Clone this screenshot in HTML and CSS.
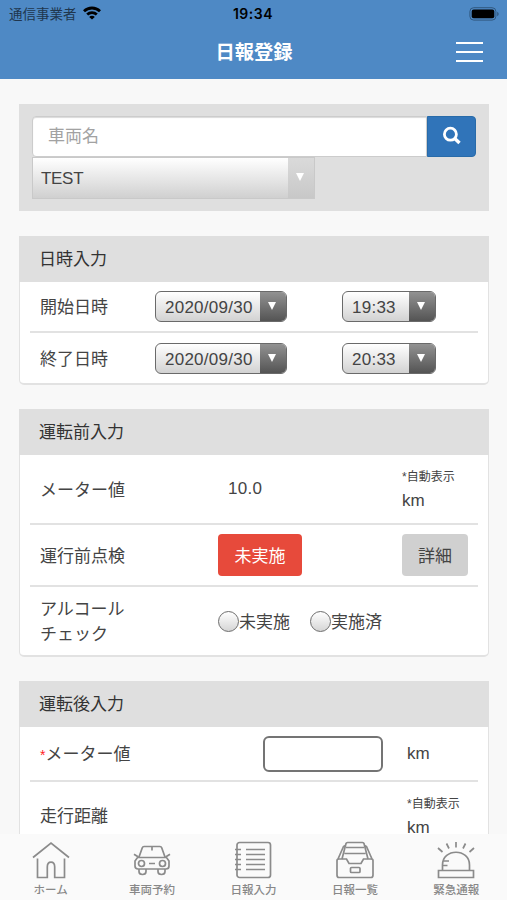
FILE: index.html
```html
<!DOCTYPE html>
<html lang="ja">

<head>
    <meta charset="UTF-8">
    <meta name="viewport" content="width=device-width, initial-scale=1.0">
    <title>日報登録</title>
    <link rel="stylesheet" href="styles.css">
</head>

<body>
    <!-- ヘッダー -->
    <header class="header">
        <div class="status">
            <div class="carrier">
                <span>通信事業者</span>
                <svg width="18" height="14" viewBox="0 0 18 14">
                    <g fill="none" stroke="#000" stroke-width="2.8">
                        <path d="M1 5.2a11.6 11.6 0 0 1 16 0" />
                        <path d="M4.2 8.6a7 7 0 0 1 9.6 0" />
                    </g>
                    <path d="M9 13.6 6.2 10.9a3.8 3.8 0 0 1 5.6 0z" />
                </svg>
            </div>
            <span class="clock">19:34</span>
            <svg class="battery" width="31" height="14" viewBox="0 0 31 14">
                <rect x="0.9" y="0.7" width="26" height="12.4" rx="3.8" fill="none" stroke="#31587f" stroke-width="1" />
                <rect x="2.7" y="2.5" width="22.6" height="8.8" rx="2" />
                <path d="M28.2 4.8v4.4c2-.8 2-3.6 0-4.4z" fill="#31587f" />
            </svg>
        </div>
        <div class="titlebar">
            <h1>日報登録</h1>
            <div class="menu"><span></span><span></span><span></span></div>
        </div>
    </header>

    <main class="content">
        <!-- 車両検索 -->
        <div class="search">
            <div class="search-row">
                <input type="text" class="search-input" placeholder="車両名">
                <button class="search-button">
                    <svg width="20" height="20" viewBox="0 0 20 20" fill="none" stroke="#fff">
                        <circle cx="8.4" cy="8.2" r="6" stroke-width="2.8" />
                        <path d="m12.5 12.3 5 4.8" stroke-width="3.4" />
                    </svg>
                </button>
            </div>
            <div class="car-select"><span>TEST</span><i><b></b></i></div>
        </div>

        <!-- 日時入力 -->
        <section class="card">
            <h2>日時入力</h2>
            <div class="row row-date">
                <span class="label">開始日時</span>
                <div class="select"><span>2020/09/30</span><i><b></b></i></div>
                <div class="select time"><span>19:33</span><i><b></b></i></div>
            </div>
            <div class="row row-date">
                <span class="label">終了日時</span>
                <div class="select"><span>2020/09/30</span><i><b></b></i></div>
                <div class="select time"><span>20:33</span><i><b></b></i></div>
            </div>
        </section>

        <!-- 運転前入力 -->
        <section class="card before">
            <h2>運転前入力</h2>
            <div class="row row-meter">
                <span class="label">メーター値</span>
                <span class="value">10.0</span>
                <div class="unit"><small>*自動表示</small>km</div>
            </div>
            <div class="row row-check">
                <span class="label">運行前点検</span>
                <div><button class="button red">未実施</button></div>
                <button class="button gray">詳細</button>
            </div>
            <div class="row row-alcohol">
                <span class="label">アルコール<br>チェック</span>
                <div class="radios">
                    <label><span class="radio"></span>未実施</label>
                    <label><span class="radio"></span>実施済</label>
                </div>
            </div>
        </section>

        <!-- 運転後入力 -->
        <section class="card after">
            <h2>運転後入力</h2>
            <div class="row row-after">
                <span class="label"><em>*</em>メーター値</span>
                <input type="text" class="meter-input">
                <div class="unit">km</div>
            </div>
            <div class="row row-distance">
                <span class="label">走行距離</span>
                <span></span>
                <div class="unit"><small>*自動表示</small>km</div>
            </div>
        </section>
    </main>

    <!-- 下部メニュー -->
    <nav class="tabbar">
        <div class="tab">
            <svg width="40" height="40" viewBox="0 0 40 40">
                <path d="M2 17.5 20 3l18 14.5M6.5 18.500v19h9.8V27c0-6.5 7.4-6.5 7.4 0v10.5h9.8V18.500" />
            </svg>
            <span>ホーム</span>
        </div>
        <div class="tab">
            <svg width="40" height="40" viewBox="0 0 40 40">
                <path d="M7 17 10.3 7.7Q10.7 6.500 12 6.500H28Q29.300 6.500 29.700 7.700L33 17M5.500 17.500H34.500L37 21V26Q37 29 34 29H6Q3 29 3 26V21ZM20 7v3.500M2 14.200 6 16.800M38 14.200 34 16.800M17 23.500h6M7 29v2.500c0 4 7 4 7 0V29M26 29v2.500c0 4 7 4 7 0V29" />
                <circle cx="9.500" cy="23.500" r="3" />
                <circle cx="30.500" cy="23.500" r="3" />
            </svg>
            <span>車両予約</span>
        </div>
        <div class="tab">
            <svg width="40" height="40" viewBox="0 0 40 40">
                <rect x="4" y="2.500" width="33.500" height="35" rx="2.500" />
                <path d="M13 9.500h19M13 14.500h19M13 19.500h19M13 24.500h19M13 29.500h19" />
                <path d="M2 9.500h6M2 14.500h6M2 19.500h6M2 24.500h6M2 29.500h6" />
            </svg>
            <span>日報入力</span>
        </div>
        <div class="tab">
            <svg width="40" height="40" viewBox="0 0 40 40">
                <path d="M2 20.500Q2 19 4 19H11.500L14 23.500H26L28.500 19H36Q38 19 38 20.500V35Q38 37.500 36 37.500H4Q2 37.500 2 35Z" />
                <path d="M3 19 8.500 6.500 11 5M37 19 31.500 6.500 29 5M7 19 11 3.500Q11.300 2.500 12.500 2.500H27.500Q28.700 2.500 29 3.500L33 19M11 7.500h18M9.500 13.500h21" />
                <rect x="15.500" y="27.500" width="9.500" height="5" rx="1" />
            </svg>
            <span>日報一覧</span>
        </div>
        <div class="tab">
            <svg width="40" height="40" viewBox="0 0 40 40">
                <path d="M2.500 30.500h35v7h-35zM6.500 30.500V25C6.500 8 33.500 8 33.500 25v5.500M7.500 21h5.500M7 25.500h4.500" />
                <path d="M20 2v5.500M10.500 3.500l2.500 5M29.500 3.500 27 8.500M2 8l4.500 4M38 8l-4.500 4" />
            </svg>
            <span>緊急通報</span>
        </div>
    </nav>
</body>

</html>
```
FILE: styles.css
```css
* {
    box-sizing: border-box;
}

body {
    margin: 0;
    height: 900px;
    display: flex;
    flex-direction: column;
    overflow: hidden;
    background: #f8f8f8;
    color: #444;
    font-family: "Liberation Sans", "Noto Sans CJK JP", sans-serif;
    font-size: 17px;
}

svg {
    display: block;
}

/* ヘッダー */
.header {
    flex: none;
    height: 79px;
    background: #4e89c5;
}

.status {
    display: grid;
    grid-template-columns: 1fr auto 1fr;
    align-items: center;
    height: 27px;
    padding: 0 7px 0 9px;
}

.carrier {
    display: flex;
    align-items: center;
    gap: 6px;
    font-size: 13.5px;
    color: #20364d;
}

.carrier span {
    margin-top: -2px;
}

.carrier svg {
    margin-top: -2px;
}

.clock {
    margin-left: -3px;
    font-family: Inter, sans-serif;
    font-size: 14px;
    font-weight: 600;
    letter-spacing: 0.5px;
    color: #000;
}

.battery {
    justify-self: end;
}

.titlebar {
    display: grid;
    grid-template-columns: 1fr auto 1fr;
    align-items: center;
    height: 50px;
    padding-right: 24px;
    padding-left: 24px;
}

h1 {
    grid-column: 2;
    margin: -2px 0 0 1px;
    font-size: 19.3px;
    color: #fff;
}

.menu {
    justify-self: end;
    width: 27px;
    display: flex;
    flex-direction: column;
    gap: 7px;
}

.menu span {
    height: 2px;
    background: #fff;
}

/* 入力エリア */
.content {
    flex: 1;
    min-height: 0;
    overflow: hidden;
    padding: 25px 18px 0 19px;
}

.search {
    height: 107px;
    margin-bottom: 24px;
    padding: 12px 13px;
    background: #dfdfdf;
}

.search-row {
    display: flex;
    height: 41px;
}

.search-input {
    flex: 1;
    border: 1px solid #ccc;
    border-radius: 4px 0 0 4px;
    box-shadow: inset 0 1px 1px rgba(0, 0, 0, 0.15);
    padding: 0 15px;
    font: inherit;
}

.search-input::placeholder {
    color: #a2a2a2;
}

.search-button {
    width: 49px;
    border: 1px solid #286ba9;
    border-radius: 0 4px 4px 0;
    background: #3074b9;
    padding: 0 0 2px 14px;
}

.car-select {
    display: flex;
    width: 283px;
    height: 42px;
    border: 1px solid #c9c9c9;
    background: linear-gradient(#fff, #d0d0d0);
    line-height: 41px;
}

.car-select span {
    flex: 1;
    padding-left: 8px;
    letter-spacing: -0.3px;
}

i {
    display: flex;
    align-items: center;
    justify-content: center;
    width: 26px;
    padding-right: 2px;
    background: linear-gradient(#929292, #545454);
}

/* 下向き三角 */
b {
    margin-bottom: 2px;
    border-top: 8px solid #fff;
    border-left: 4.5px solid transparent;
    border-right: 4.5px solid transparent;
}

.car-select i {
    background: linear-gradient(#dadada, #c8c8c8);
}

.card {
    height: 149px;
    margin-bottom: 24px;
    border: 1px solid #e2e2e2;
    border-bottom: 2px solid #e2e2e2;
    border-radius: 2px 2px 5px 5px;
    background: #fff;
}

.search + .card {
    margin-top: 25px;
}

.before {
    height: 248px;
}

.after {
    height: 200px;
}

h2 {
    height: 46px;
    margin: -1px -1px 0;
    padding-left: 20px;
    background: #dfdfdf;
    color: #333;
    font-size: 17px;
    font-weight: 400;
    line-height: 47px;
}

.row {
    display: grid;
    align-items: center;
    margin: 0 10px;
    padding-left: 10px;
    border-bottom: 2px solid #e2e2e2;
}

.row:last-child {
    border-bottom: none;
}

.row-date {
    grid-template-columns: 115px 187px 1fr;
    height: 51px;
}

.row-date .label {
    margin-top: -2px;
}

.label em {
    color: #f22;
    font-style: normal;
    font-size: 14px;
}

.select {
    display: flex;
    width: 132px;
    height: 31px;
    border: 1px solid #6a6a6a;
    border-radius: 6px;
    overflow: hidden;
    background: linear-gradient(#fff, #d2d2d2);
    line-height: 31px;
}

.select span {
    flex: 1;
    padding-left: 9px;
    letter-spacing: 0.25px;
}

.time {
    width: 94px;
}

.row-meter,
.row-check {
    grid-template-columns: 178px 184px 1fr;
    height: 70px;
}

.row-meter .label {
    margin-top: -1px;
}

.row-check {
    height: 62px;
}

.row-check .label {
    margin-top: -2px;
}

.row-alcohol {
    grid-template-columns: 178px 1fr;
    height: 69px;
    line-height: 25px;
}

.value {
    padding-left: 10px;
    letter-spacing: 0.25px;
}

.unit {
    line-height: 23px;
}

.unit small {
    display: block;
    font-size: 12px;
}

.button {
    width: 66px;
    height: 42px;
    border: none;
    border-radius: 4px;
    padding: 0 0 2px;
    font: inherit;
    color: inherit;
    background: #d0d0d0;
}

.red {
    width: 84px;
    background: #e74a3b;
    color: #fff;
}

.radios {
    display: flex;
    gap: 20px;
    padding-top: 2px;
}

.radios label {
    display: flex;
    align-items: center;
}

.radio {
    width: 21px;
    height: 21px;
    margin-top: -2px;
    border: 1.5px solid #6d6d6d;
    border-radius: 50%;
    background: linear-gradient(#fff, #d5d5d5);
}

.row-after {
    grid-template-columns: 223px 144px 1fr;
    height: 55px;
}

.row-after .label {
    margin-top: -2px;
}

.meter-input {
    width: 120px;
    height: 36px;
    border: 2px solid #747474;
    border-radius: 6px;
    background: #fff;
}

.row-distance {
    grid-template-columns: 223px 144px 1fr;
    height: 67px;
}

.row-distance .label {
    margin-top: -2px;
}

/* 下部メニュー */
.tabbar {
    flex: none;
    display: grid;
    grid-template-columns: repeat(5, 1fr);
    height: 66px;
    background: #fafafa;
}

.tab {
    display: flex;
    flex-direction: column;
    align-items: center;
    padding-top: 6px;
    color: #888;
    font-size: 11.5px;
    font-weight: 500;
    line-height: 21px;
}

.tab svg {
    fill: none;
    stroke: #8b8b8b;
    stroke-width: 1.7;
}
```
